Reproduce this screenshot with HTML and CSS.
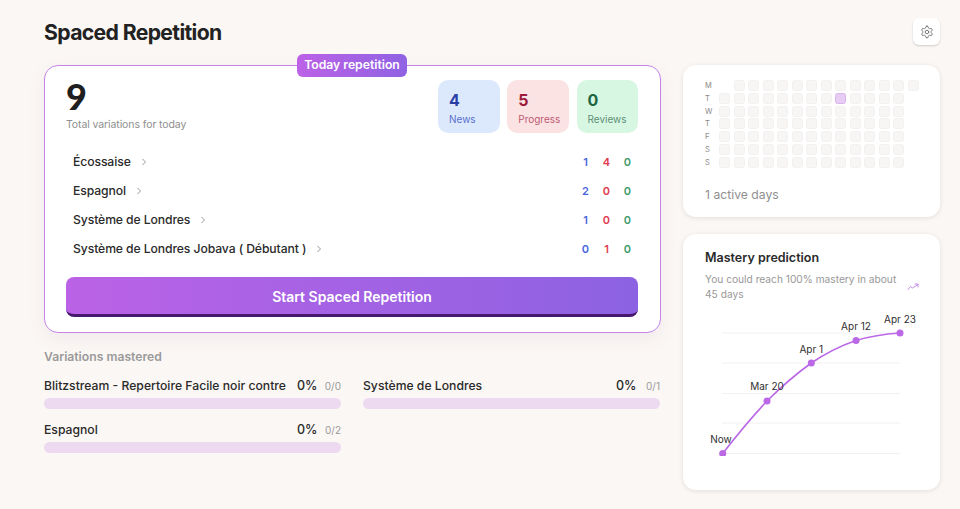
FILE: index.html
```html
<!DOCTYPE html>
<html lang="en">
<head>
<meta charset="utf-8">
<title>Spaced Repetition</title>
<link rel="stylesheet" href="styles.css">
</head>
<body>
<main class="page">
  <header class="head">
    <h1 class="title">Spaced Repetition</h1>
    <button class="gear" aria-label="Settings">
      <svg width="14" height="14" viewBox="0 0 24 24" fill="none" stroke="#747474" stroke-width="1.700" stroke-linecap="round" stroke-linejoin="round"><path d="M12.220 2h-.44a2 2 0 0 0-2 2v.18a2 2 0 0 1-1 1.730l-.43.25a2 2 0 0 1-2 0l-.15-.08a2 2 0 0 0-2.730.73l-.22.38a2 2 0 0 0 .73 2.730l.15.1a2 2 0 0 1 1 1.720v.51a2 2 0 0 1-1 1.740l-.15.09a2 2 0 0 0-.73 2.730l.22.38a2 2 0 0 0 2.730.73l.15-.08a2 2 0 0 1 2 0l.43.25a2 2 0 0 1 1 1.730V20a2 2 0 0 0 2 2h.44a2 2 0 0 0 2-2v-.18a2 2 0 0 1 1-1.730l.43-.25a2 2 0 0 1 2 0l.15.08a2 2 0 0 0 2.730-.73l.22-.39a2 2 0 0 0-.73-2.730l-.15-.08a2 2 0 0 1-1-1.740v-.5a2 2 0 0 1 1-1.740l.15-.09a2 2 0 0 0 .73-2.730l-.22-.38a2 2 0 0 0-2.730-.73l-.15.08a2 2 0 0 1-2 0l-.43-.25a2 2 0 0 1-1-1.730V4a2 2 0 0 0-2-2z"/><circle cx="12" cy="12" r="3"/></svg>
    </button>
  </header>
  <div class="columns">
    <section class="left">
      <div class="today">
        <span class="ribbon">Today repetition</span>
        <div class="today-top">
          <div class="total">
            <div class="total-num">9</div>
            <div class="total-label">Total variations for today</div>
          </div>
          <div class="stats">
            <div class="stat stat-news"><b>4</b><span>News</span></div>
            <div class="stat stat-progress"><b>5</b><span>Progress</span></div>
            <div class="stat stat-reviews"><b>0</b><span>Reviews</span></div>
          </div>
        </div>
        <ul class="rep-list">
          <li class="rep"><span class="rep-name">Écossaise<svg class="chev" width="8" height="8" viewBox="0 0 8 8"><path d="M2.500 1l3 3-3 3"/></svg></span><span class="counts"><i class="c-new">1</i><i class="c-prog">4</i><i class="c-rev">0</i></span></li>
          <li class="rep"><span class="rep-name">Espagnol<svg class="chev" width="8" height="8" viewBox="0 0 8 8"><path d="M2.500 1l3 3-3 3"/></svg></span><span class="counts"><i class="c-new">2</i><i class="c-prog">0</i><i class="c-rev">0</i></span></li>
          <li class="rep"><span class="rep-name">Système de Londres<svg class="chev" width="8" height="8" viewBox="0 0 8 8"><path d="M2.500 1l3 3-3 3"/></svg></span><span class="counts"><i class="c-new">1</i><i class="c-prog">0</i><i class="c-rev">0</i></span></li>
          <li class="rep"><span class="rep-name">Système de Londres Jobava ( Débutant )<svg class="chev" width="8" height="8" viewBox="0 0 8 8"><path d="M2.500 1l3 3-3 3"/></svg></span><span class="counts"><i class="c-new">0</i><i class="c-prog">1</i><i class="c-rev">0</i></span></li>
        </ul>
        <button class="start">Start Spaced Repetition</button>
      </div>
      <h2 class="mastered-title">Variations mastered</h2>
      <div class="mastered">
        <div class="m-item"><div class="m-row"><span class="m-name">Blitzstream - Repertoire Facile noir contre</span><span class="m-pct">0%</span><span class="m-count">0/0</span></div><div class="m-bar"></div></div>
        <div class="m-item"><div class="m-row"><span class="m-name">Système de Londres</span><span class="m-pct">0%</span><span class="m-count">0/1</span></div><div class="m-bar"></div></div>
        <div class="m-item"><div class="m-row"><span class="m-name">Espagnol</span><span class="m-pct">0%</span><span class="m-count">0/2</span></div><div class="m-bar"></div></div>
      </div>
    </section>
    <aside class="right">
      <div class="card heat-card">
        <div class="heat">
          <div class="days"><span>M</span><span>T</span><span>W</span><span>T</span><span>F</span><span>S</span><span>S</span></div>
          <div class="cells" id="cells"></div>
        </div>
        <p class="active-days">1 active days</p>
      </div>
      <div class="card pred-card">
        <h3 class="pred-title">Mastery prediction</h3>
        <div class="pred-sub">
          <p>You could reach 100% mastery in about 45 days</p>
          <svg width="12" height="8" viewBox="0 0 12 8" fill="none" stroke="#c58be8" stroke-width="1" stroke-linecap="round" stroke-linejoin="round"><path d="M1 6.500l2.500-3 2 1.500L11 1.500M8 1h3v3"/></svg>
        </div>
        <svg class="chart" width="214" height="152" viewBox="0 0 214 152">
          <g class="grid-lines">
            <line x1="17" x2="195" y1="29" y2="29"/><line x1="17" x2="195" y1="59" y2="59"/><line x1="17" x2="195" y1="89.500" y2="89.500"/><line x1="17" x2="195" y1="119" y2="119"/><line x1="17" x2="195" y1="149.500" y2="149.500"/>
          </g>
          <path class="curve" d="M17.700 149.500C32 131 47 113 62 97C77 82 91 70 106.300 59C121 49 135 42 151 36.500C166 32 180 30 195 29"/>
          <g class="dots"><circle cx="17.700" cy="149.500" r="3.500"/><circle cx="62" cy="97" r="3.500"/><circle cx="106.300" cy="59" r="3.500"/><circle cx="151" cy="36.500" r="3.500"/><circle cx="195" cy="29" r="3.500"/></g>
          <g class="labels">
            <text x="16" y="139">Now</text><text x="62" y="86">Mar 20</text><text x="106.300" y="49">Apr 1</text><text x="151" y="26">Apr 12</text><text x="195" y="19">Apr 23</text>
          </g>
        </svg>
      </div>
    </aside>
  </div>
</main>
<script src="heat.js"></script>
</body>
</html>
```
FILE: heat.js
```js
var cells = document.getElementById('cells');
for (var r = 0; r < 7; r++) {
  for (var c = 0; c < 14; c++) {
    var el = document.createElement('div');
    var blank = (r === 0 && c === 0) || (r > 0 && c === 13);
    el.className = blank ? 'cell-blank' : (r === 1 && c === 8 ? 'cell cell-on' : 'cell');
    cells.appendChild(el);
  }
}
```
FILE: styles.css
```css
* { box-sizing: border-box; }
html, body { margin: 0; height: 100%; }
body { background: #fbf7f4; color: #222; font-family: "Inter", "Liberation Sans", sans-serif; overflow: hidden; }
.page { padding: 18px 20px 0 44px; }
.head { display: flex; justify-content: space-between; align-items: flex-start; height: 47px; }
.title { margin: 0; font-size: 21.200px; line-height: 28px; font-weight: 700; letter-spacing: -0.650px; color: #222; }
.gear { width: 27px; height: 27px; border: 0; padding: 0; background: #fff; border-radius: 6px; box-shadow: 0 1px 2px rgba(0,0,0,.18); display: flex; align-items: center; justify-content: center; }
.columns { display: flex; gap: 22.500px; align-items: flex-start; }
.left { width: 616.500px; }
.right { width: 257px; display: flex; flex-direction: column; gap: 17px; }

.today { position: relative; height: 268px; background: #fff; border: 1px solid #c583ea; border-radius: 14px; padding: 14px 21.500px 0 21px; box-shadow: 0 6px 18px rgba(120,80,140,.07); }
.ribbon { position: absolute; top: -12px; left: 252px; width: 110px; height: 23px; border-radius: 6px; background: linear-gradient(90deg, #bc62e6, #8f62e3); color: #fff; font-size: 12.200px; font-weight: 600; line-height: 22px; text-align: center; white-space: nowrap; }
.today-top { display: flex; justify-content: space-between; align-items: flex-start; height: 66px; }
.total-num { margin-top: -2px; font-family: "Lato", sans-serif; font-size: 36px; font-weight: 900; line-height: 36px; color: #1f1f1f; }
.total-label { margin-top: 3px; font-size: 10.500px; line-height: 16px; letter-spacing: -0.100px; color: #8f8f8f; }
.stats { display: flex; gap: 7.750px; }
.stat { width: 61.500px; height: 53px; border-radius: 10px; padding: 10px 11px; display: flex; flex-direction: column; }
.stat b { font-size: 16px; line-height: 20px; font-weight: 700; }
.stat span { font-size: 10px; line-height: 15px; margin-top: 2px; }
.stat-news { background: #dce9fc; color: #2a3fa6; }
.stat-news span { color: #5b6fd0; }
.stat-progress { background: #fbe3e3; color: #9c1b3d; }
.stat-progress span { color: #bd5a74; }
.stat-reviews { background: #d8f7e2; color: #1c6540; }
.stat-reviews span { color: #5f8f78; }

.rep-list { list-style: none; margin: 0; padding: 0 0 0 7px; }
.rep { display: flex; justify-content: space-between; align-items: center; height: 29px; }
.rep:first-child { margin-top: 1px; }
.rep-name { font-size: 12.200px; font-weight: 500; letter-spacing: -0.100px; color: #2a2a2a; display: flex; align-items: center; gap: 9px; }
.chev { fill: none; stroke: #9a9a9a; stroke-width: 1; }
.counts { display: flex; }
.counts i { font-style: normal; font-size: 11px; font-weight: 600; width: 21px; text-align: center; }
.c-new { color: #4a66e0; }
.c-prog { color: #e0394f; }
.c-rev { color: #3f9a6a; }
.start { display: block; width: 572px; height: 40px; margin-top: 14px; padding: 1px 0 0; border: 0; border-bottom: 3px solid #46196f; border-radius: 8px; background: linear-gradient(90deg, #bb62e6, #8c62e2); color: #fff; font: 600 14px "Inter", "Liberation Sans", sans-serif; }

.mastered-title { margin: 16px 0 0; font-size: 12.200px; line-height: 16px; font-weight: 600; color: #9a9a9a; }
.mastered { display: grid; grid-template-columns: 297px 297px; column-gap: 22px; row-gap: 13px; margin-top: 13px; }
.m-row { display: flex; align-items: baseline; height: 17px; }
.m-name { flex: 1; font-size: 12.200px; font-weight: 500; color: #2a2a2a; white-space: nowrap; }
.m-pct { font-size: 12.500px; font-weight: 500; color: #2a2a2a; }
.m-count { width: 23.500px; text-align: right; font-size: 10px; color: #9a9a9a; }
.m-bar { height: 11px; margin-top: 3px; border-radius: 6px; background: #eddaf0; }

.card { background: #fff; border-radius: 13px; box-shadow: 0 1px 5px rgba(0,0,0,.1); }
.heat-card { height: 152px; padding: 15px 0 0 22px; }
.heat { display: flex; }
.days { width: 14px; display: flex; flex-direction: column; }
.days span { height: 12.750px; font-size: 7.500px; line-height: 12.750px; color: #8a8a8a; }
.cells { display: grid; grid-template-columns: repeat(14, 11px); grid-auto-rows: 11px; column-gap: 3.500px; row-gap: 1.750px; }
.cell { background: #f8f6f5; border: 1px solid #f3f1f0; border-radius: 2.500px; }
.cell-on { background: #e7ccf3; border-color: #d9b4ec; }
.active-days { margin: 17px 0 0; font-size: 12.200px; line-height: 18px; color: #8f8f8f; }

.pred-card { height: 256px; padding: 15px 0 0 22px; }
.pred-title { margin: 0; font-size: 12.500px; line-height: 17px; font-weight: 600; color: #2a2a2a; }
.pred-sub { display: flex; align-items: center; gap: 6px; margin-top: 6px; }
.pred-sub p { margin: 0; width: 196px; font-size: 10.200px; line-height: 15px; color: #999; }
.chart { display: block; margin-top: 2px; }
.grid-lines line { stroke: #f3f1f0; stroke-width: 1; }
.curve { fill: none; stroke: #ba68e6; stroke-width: 1.600; }
.dots circle { fill: #ba68e6; }
.labels text { font-size: 10px; fill: #2f2f2f; text-anchor: middle; }
```
